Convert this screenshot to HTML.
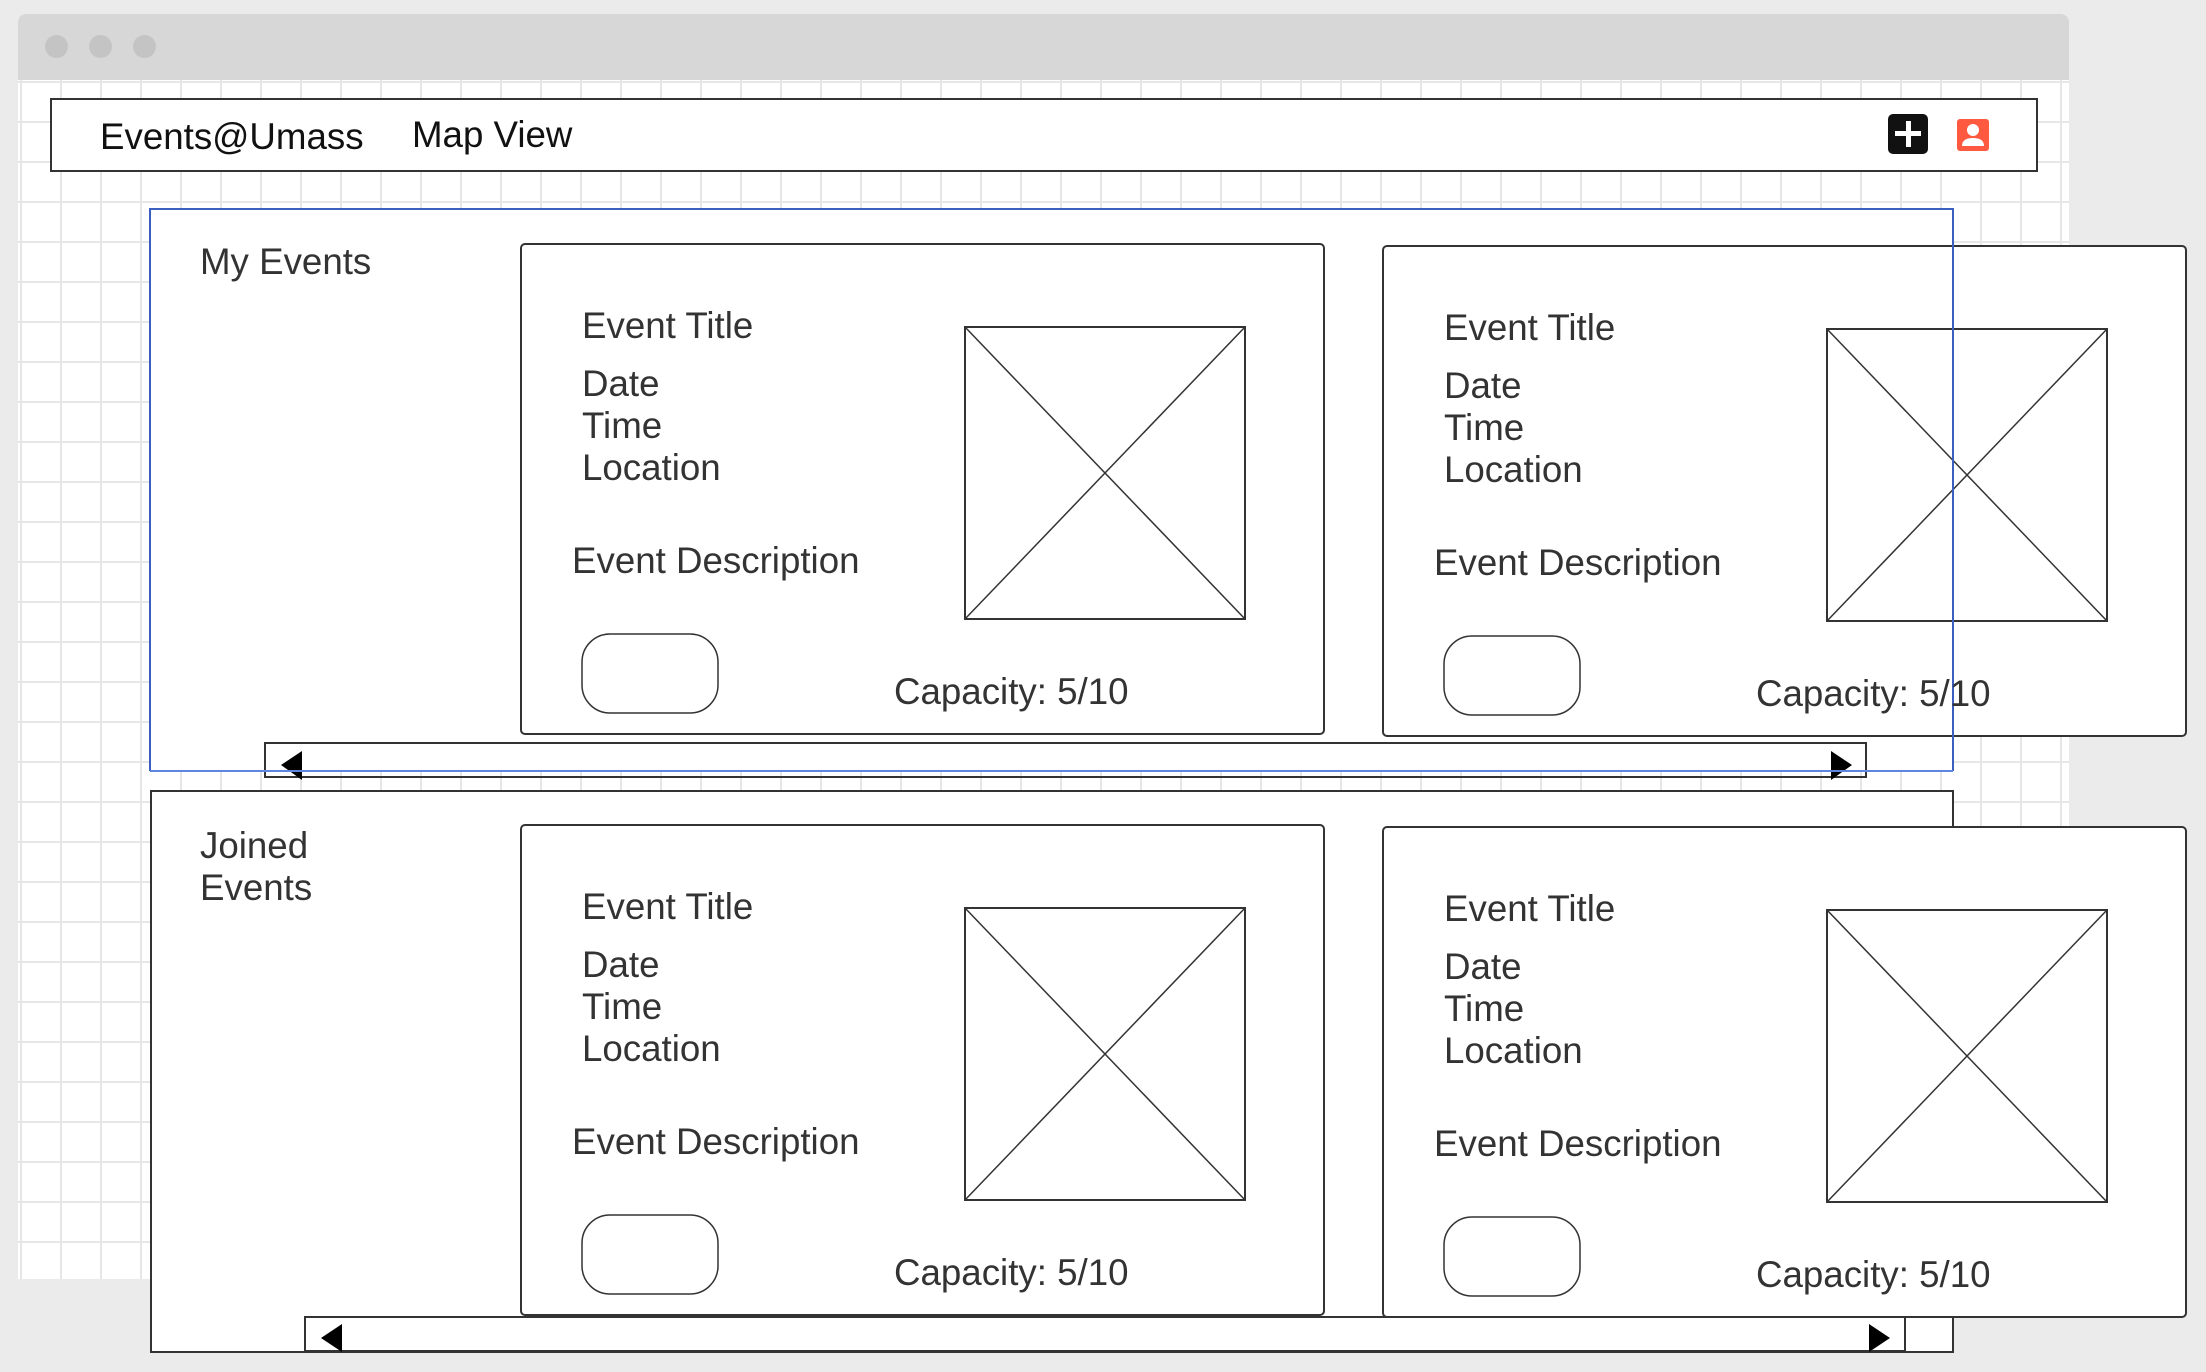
<!DOCTYPE html>
<html><head><meta charset="utf-8"><style>
html,body{margin:0;padding:0}
body{width:2206px;height:1372px;position:relative;overflow:hidden;background:#ebebeb;font-family:"Liberation Sans",sans-serif}
.abs{position:absolute}
.win{left:18px;top:14px;width:2051px;height:1265px;background:#fff;border-radius:8px 8px 0 0;overflow:hidden;
background-image:linear-gradient(#e6e6e6 2px,transparent 2px),linear-gradient(90deg,#e6e6e6 2px,transparent 2px);
background-size:40px 40px;background-position:2px 107px}
.bar{left:18px;top:14px;width:2051px;height:66px;background:#d7d7d7;border-radius:8px 8px 0 0}
.dot{width:23px;height:23px;border-radius:50%;background:#c4c4c4;top:35px}
.t{position:absolute;font-size:36.7px;color:#333;white-space:nowrap;line-height:1}
.box{position:absolute;border:2px solid #333;background:#fff;box-sizing:border-box}
</style></head><body>
<div class="abs win"></div>
<div class="abs bar"></div>
<div class="abs dot" style="left:45px"></div>
<div class="abs dot" style="left:89px"></div>
<div class="abs dot" style="left:133px"></div>

<div class="box" style="left:50px;top:98px;width:1988px;height:74px"></div>
<div class="t" style="left:100px;top:119px;color:#111">Events@Umass</div>
<div class="t" style="left:412px;top:117px;color:#111">Map View</div>
<div class="abs" style="left:1888px;top:114px;width:40px;height:40px;background:#111;border-radius:5px"></div>
<div class="abs" style="left:1906px;top:121px;width:5px;height:26px;background:#fff"></div>
<div class="abs" style="left:1895px;top:131px;width:26px;height:5px;background:#fff"></div>
<svg class="abs" style="left:1957px;top:119px" width="32" height="32" viewBox="0 0 32 32"><rect width="32" height="32" rx="3" fill="#ff5a40"/><circle cx="16" cy="11" r="6" fill="#fff"/><path d="M5 27 Q5 19 16 19 Q27 19 27 27 Z" fill="#fff"/></svg>

<div class="abs" style="left:150px;top:209px;width:1803px;height:562px;background:#fff"></div>
<div class="t" style="left:200px;top:244px">My Events</div>

<div class="box" style="left:150px;top:790px;width:1804px;height:563px"></div>
<div class="t" style="left:200px;top:825px;line-height:42px">Joined<br>Events</div>

<svg class="abs" style="left:0;top:0" width="2206" height="1372" viewBox="0 0 2206 1372">
<defs>
<g id="card">
<rect x="1" y="1" width="803" height="490" rx="4" fill="#fff" stroke="#333" stroke-width="2"/>
<rect x="445" y="84" width="280" height="292" fill="#fff" stroke="#333" stroke-width="2"/>
<path d="M445 84 L725 376 M725 84 L445 376" stroke="#333" stroke-width="1.5"/>
<rect x="62" y="391" width="136" height="79" rx="28" fill="#fff" stroke="#333" stroke-width="1.5"/>
</g>
</defs>
<use href="#card" x="520" y="243"/>
<use href="#card" x="1382" y="245"/>
<use href="#card" x="520" y="824"/>
<use href="#card" x="1382" y="826"/>
<rect x="265" y="743" width="1601" height="34" fill="none" stroke="#333" stroke-width="2"/>
<path d="M302 751 L281 765 L302 780 Z" fill="#000"/>
<path d="M1831 751 L1852 765 L1831 780 Z" fill="#000"/>
<path d="M150 771 L150 209 L1953 209 L1953 771" fill="none" stroke="#3a5fc0" stroke-width="2"/>
<path d="M150 771 L1953 771" fill="none" stroke="#5d86e0" stroke-width="2"/>
<rect x="305" y="1317" width="1600" height="34" fill="#fff" stroke="#333" stroke-width="2"/>
<path d="M342 1324 L321 1338 L342 1352 Z" fill="#000"/>
<path d="M1869 1324 L1890 1338 L1869 1352 Z" fill="#000"/>
</svg>

<div class="abs" style="left:0;top:2px">
<div class="t" style="left:582px;top:306px">Event Title</div>
<div class="t" style="left:582px;top:364px">Date</div>
<div class="t" style="left:582px;top:406px">Time</div>
<div class="t" style="left:582px;top:448px">Location</div>
<div class="t" style="left:572px;top:541px">Event Description</div>
<div class="t" style="left:894px;top:672px">Capacity: 5/10</div>
</div>
<div class="abs" style="left:862px;top:4px">
<div class="t" style="left:582px;top:306px">Event Title</div>
<div class="t" style="left:582px;top:364px">Date</div>
<div class="t" style="left:582px;top:406px">Time</div>
<div class="t" style="left:582px;top:448px">Location</div>
<div class="t" style="left:572px;top:541px">Event Description</div>
<div class="t" style="left:894px;top:672px">Capacity: 5/10</div>
</div>
<div class="abs" style="left:0;top:583px">
<div class="t" style="left:582px;top:306px">Event Title</div>
<div class="t" style="left:582px;top:364px">Date</div>
<div class="t" style="left:582px;top:406px">Time</div>
<div class="t" style="left:582px;top:448px">Location</div>
<div class="t" style="left:572px;top:541px">Event Description</div>
<div class="t" style="left:894px;top:672px">Capacity: 5/10</div>
</div>
<div class="abs" style="left:862px;top:585px">
<div class="t" style="left:582px;top:306px">Event Title</div>
<div class="t" style="left:582px;top:364px">Date</div>
<div class="t" style="left:582px;top:406px">Time</div>
<div class="t" style="left:582px;top:448px">Location</div>
<div class="t" style="left:572px;top:541px">Event Description</div>
<div class="t" style="left:894px;top:672px">Capacity: 5/10</div>
</div>
</body></html>
